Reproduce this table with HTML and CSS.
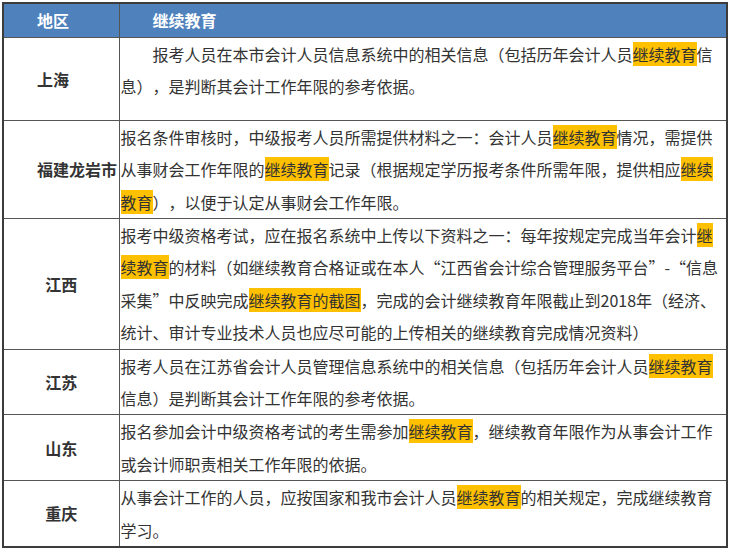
FILE: index.html
```html
<!DOCTYPE html>
<html lang="zh-CN">
<head>
<meta charset="utf-8">
<title>继续教育</title>
<link rel="stylesheet" href="styles.css">
</head>
<body>
<table class="edu">
  <colgroup><col class="c1"><col class="c2"></colgroup>
  <thead>
    <tr><th class="region indent">地区</th><th class="text indent">继续教育</th></tr>
  </thead>
  <tbody>
    <tr>
      <td class="region indent">上海</td>
      <td class="text indent first">报考人员在本市会计人员信息系统中的相关信息（包括历年会计人员<span class="hl">继续教育</span>信息），是判断其会计工作年限的参考依据。</td>
    </tr>
    <tr>
      <td class="region indent">福建龙岩市</td>
      <td class="text">报名条件审核时，中级报考人员所需提供材料之一：会计人员<span class="hl">继续教育</span>情况，需提供从事财会工作年限的<span class="hl">继续教育</span>记录（根据规定学历报考条件所需年限，提供相应<span class="hl">继续教育</span>），以便于认定从事财会工作年限。</td>
    </tr>
    <tr>
      <td class="region">江西</td>
      <td class="text">报考中级资格考试，应在报名系统中上传以下资料之一：每年按规定完成当年会计<span class="hl">继续教育</span>的材料（如继续教育合格证或在本人“江西省会计综合管理服务平台”-“信息采集”中反映完成<span class="hl">继续教育的截图</span>，完成的会计继续教育年限截止到2018年（经济、统计、审计专业技术人员也应尽可能的上传相关的继续教育完成情况资料）</td>
    </tr>
    <tr>
      <td class="region">江苏</td>
      <td class="text">报考人员在江苏省会计人员管理信息系统中的相关信息（包括历年会计人员<span class="hl">继续教育</span>信息）是判断其会计工作年限的参考依据。</td>
    </tr>
    <tr>
      <td class="region">山东</td>
      <td class="text">报名参加会计中级资格考试的考生需参加<span class="hl">继续教育</span>，继续教育年限作为从事会计工作或会计师职责相关工作年限的依据。</td>
    </tr>
    <tr>
      <td class="region">重庆</td>
      <td class="text">从事会计工作的人员，应按国家和我市会计人员<span class="hl">继续教育</span>的相关规定，完成继续教育学习。</td>
    </tr>
  </tbody>
</table>
</body>
</html>
```
FILE: styles.css
```css
html, body {
  margin: 0;
  padding: 0;
  background: #ffffff;
}
body {
  padding: 2px 0 0 2px;
  font-family: "Noto Sans CJK SC", "Noto Sans", sans-serif;
  font-size: 16px;
  color: #333333;
  text-spacing-trim: space-all;
}
.edu {
  border-collapse: collapse;
  width: 726px;
  table-layout: fixed;
  border: 2px solid #3c3c3c;
}
.c1 { width: 116px; }
.edu th, .edu td {
  border: 1px solid #555555;
  padding: 0 1px;
  line-height: 32.4px;
  vertical-align: middle;
  text-align: left;
}
.edu thead th {
  background: #4f81bd;
  color: #ffffff;
  font-weight: bold;
  line-height: 33px;
}
.region {
  font-weight: bold;
  text-align: center !important;
}
.region.indent {
  text-align: left !important;
}
.indent {
  text-indent: 2em;
}
.text.first {
  vertical-align: top;
  padding-bottom: 17px;
}
.hl {
  background: #ffc000;
}
```
